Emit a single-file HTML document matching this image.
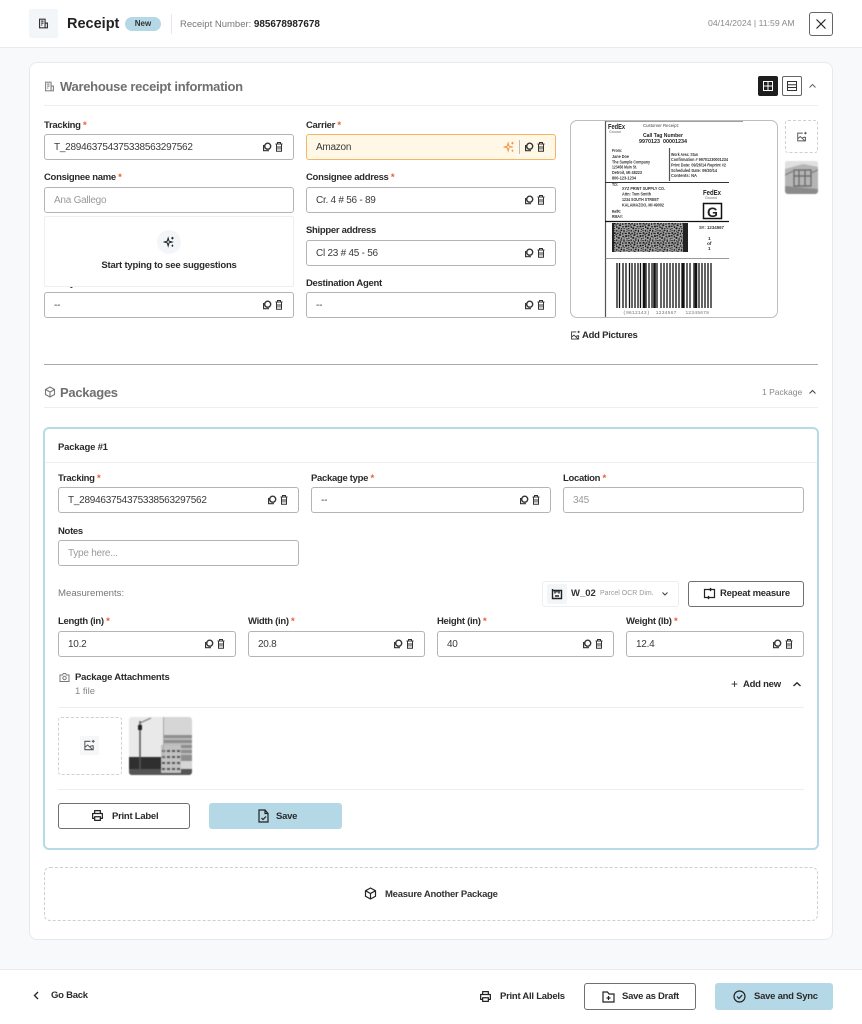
<!DOCTYPE html>
<html lang="en"><head><meta charset="utf-8"><title>Receipt</title>
<style>
*{box-sizing:border-box}
html,body{margin:0;padding:0}
body{width:862px;height:1024px;position:relative;overflow:hidden;background:#f8f9fb;font-family:"Liberation Sans",sans-serif;color:#1c1c1c}
.a{position:absolute}
.t{position:absolute;white-space:nowrap;line-height:14px}
.lb{position:absolute;white-space:nowrap;font-size:9.5px;letter-spacing:-.3px;font-weight:700;color:#2b2b2b;line-height:14px}
.lb i{color:#ef5a2a;font-style:normal}
.in{position:absolute;height:26px;background:#fff;border:1px solid #b4b4b4;border-radius:3px;font-size:10px;letter-spacing:-.25px;line-height:25px;padding-left:9px;color:#3a3a3a;white-space:nowrap}
.in.ph{color:#9a9a9a}
.ic{position:absolute;right:5px;top:6px;width:28px;height:12px;display:block}
svg{display:block}
.ln{position:absolute;height:1px;background:#eceef0}
.btn{position:absolute;border-radius:3px;font-size:9.5px;letter-spacing:-.25px;font-weight:700;color:#2b2b2b;white-space:nowrap}
.ol{background:#fff;border:1px solid #707070}
.fl{background:#b5d8e6}
.bt{font-size:9.5px;letter-spacing:-.25px;font-weight:700;color:#2b2b2b}
.h{font-size:13px;letter-spacing:-.28px;font-weight:700;color:#6f6f6f;line-height:15px}
</style></head><body>
<svg width="0" height="0" style="position:absolute"><defs>
<symbol id="act" viewBox="0 0 28 12">
<circle cx="7.700" cy="5.200" r="3" fill="none" stroke="#333" stroke-width="1.400"/><path d="M3.600 4v5.700h5.400" fill="none" stroke="#333" stroke-width="1.200"/>
<path d="M15.500 3h7M17.500 3V1.500h3V3M16.500 3.500v6.800h5V3.500M18 5v3.500M20 5v3.500" fill="none" stroke="#333" stroke-width="1"/>
</symbol>
<symbol id="doc" viewBox="0 0 14 14"><path d="M2 12.500V1.500h7v11zM9 6.500h3v6H9M4 4h3M4 6.500h3M4 9h1.500" fill="none" stroke="currentColor" stroke-width="1.500"/></symbol>
<symbol id="pic" viewBox="0 0 14 14"><path d="M8 2.500H2v9h9V7M2 9l3-2.500 5 4.500M7.500 8l3.500-1M11 1v3M9.500 2.500h3" fill="none" stroke="currentColor" stroke-width="1.100"/></symbol>
<symbol id="print" viewBox="0 0 16 16"><path d="M4.500 5V2h7v3M4.500 11.500H2V5.500h12v6h-2.500M4.500 9.500h7V14h-7z" fill="none" stroke="#222" stroke-width="1.500" stroke-linejoin="round"/></symbol>
<symbol id="spark" viewBox="0 0 14 14"><path d="M6 2.500l1 3.500 3.500 1-3.500 1-1 3.500-1-3.500-3.500-1 3.500-1zM11 1v3M9.500 2.500h3M11 10v2.500M10 11.200h2" fill="none" stroke="currentColor" stroke-width="1.200"/></symbol>
<pattern id="qr" width="24" height="16" patternUnits="userSpaceOnUse" patternTransform="scale(.6)"><rect width="24" height="16" fill="#a8a8a8"/><path d="M0 0h3v2H0zM5 1h2v3H5zM9 0h4v1H9zM15 1h3v2h-3zM20 0h3v3h-3zM1 4h2v2H1zM8 3h3v3H8zM13 4h2v2h-2zM17 4h3v1h-3zM22 5h2v2h-2zM0 8h4v1H0zM5 7h2v3H5zM9 8h1v3H9zM12 7h3v2h-3zM17 7h2v4h-2zM21 9h3v1h-3zM1 11h3v3H1zM6 12h3v2H6zM11 10h2v3h-2zM15 12h2v3h-2zM19 12h4v2h-4zM4 14h2v2H4zM10 14h3v2h-3z" fill="#111"/></pattern>
</defs></svg>

<!-- top bar -->
<div class="a" style="left:0;top:0;width:862px;height:48px;background:#fff;border-bottom:1px solid #e8eaee"></div>
<div class="a" style="left:29px;top:9px;width:29px;height:29px;background:#f3f6f8;border-radius:2px;color:#333;padding:9px"><svg width="11" height="11"><use href="#doc"/></svg></div>
<div class="t" style="left:67px;top:17px;font-size:14.500px;font-weight:700;color:#222">Receipt</div>
<div class="a" style="left:125px;top:17px;width:36px;height:14px;border-radius:7px;background:#b5d8e6;font-size:8px;font-weight:700;text-align:center;line-height:14px;color:#333">New</div>
<div class="a" style="left:171px;top:14px;width:1px;height:20px;background:#e6e8ea"></div>
<div class="t" style="left:180px;top:18px;font-size:9.500px;color:#777">Receipt Number: <b style="color:#222;font-size:9.900px">985678987678</b></div>
<div class="t" style="left:708px;top:16px;font-size:8.700px;color:#8a8a8a">04/14/2024 | 11:59 AM</div>
<div class="a" style="left:809px;top:12px;width:24px;height:24px;border:1px solid #666;border-radius:3px;background:#fff"><svg width="22" height="22"><path d="M6.500 6.500l9 9M15.500 6.500l-9 9" stroke="#222" stroke-width="1.200"/></svg></div>

<!-- main card -->
<div class="a" style="left:29px;top:62px;width:804px;height:878px;background:#fff;border:1px solid #e7e9ed;border-radius:8px"></div>
<div class="a" style="left:44px;top:81px;color:#888"><svg width="11" height="11"><use href="#doc"/></svg></div>
<div class="t h" style="left:60px;top:79px">Warehouse receipt information</div>
<div class="a" style="left:758px;top:76px;width:20px;height:20px;background:#1e1e1e;border-radius:2px"><svg width="20" height="20"><path d="M5.500 5.500h9v9h-9zM10 5.500v9M5.500 10h9" fill="none" stroke="#fff" stroke-width="1"/></svg></div>
<div class="a" style="left:782px;top:76px;width:20px;height:20px;border:1px solid #666;border-radius:2px;background:#fff"><svg width="18" height="18"><path d="M4.500 4.500h9v9h-9zM4.500 7.700h9M4.500 10.500h9" fill="none" stroke="#333" stroke-width="1"/></svg></div>
<svg class="a" style="left:808px;top:83px" width="9" height="6"><path d="M1.500 4.500L4.500 1.500l3 3" fill="none" stroke="#666" stroke-width="1"/></svg>
<div class="ln" style="left:44px;top:105px;width:774px"></div>

<div class="lb" style="left:44px;top:119px">Tracking <i>*</i></div>
<div class="in" style="left:44px;top:134px;width:250px">T_289463754375338563297562<svg class="ic"><use href="#act"/></svg></div>
<div class="lb" style="left:306px;top:119px">Carrier <i>*</i></div>
<div class="in" style="left:306px;top:134px;width:250px;background:#fff8e6;border-color:#f5b565">Amazon
<svg class="a" style="left:196px;top:6px;color:#f0954a" width="12" height="12" viewBox="0 0 14 14"><use href="#spark"/></svg>
<div class="a" style="left:212px;top:5px;width:1px;height:14px;background:#bbb"></div><svg class="ic"><use href="#act"/></svg></div>

<div class="lb" style="left:44px;top:171px">Consignee name <i>*</i></div>
<div class="in ph" style="left:44px;top:187px;width:250px">Ana Gallego</div>
<div class="lb" style="left:306px;top:171px">Consignee address <i>*</i></div>
<div class="in" style="left:306px;top:187px;width:250px">Cr. 4 # 56 - 89<svg class="ic"><use href="#act"/></svg></div>
<div class="lb" style="left:306px;top:224px">Shipper address</div>
<div class="in" style="left:306px;top:240px;width:250px">Cl 23 # 45 - 56<svg class="ic"><use href="#act"/></svg></div>
<div class="lb" style="left:306px;top:277px">Destination Agent</div>
<div class="in" style="left:306px;top:292px;width:250px">--<svg class="ic"><use href="#act"/></svg></div>
<div class="in" style="left:44px;top:292px;width:250px">--<svg class="ic"><use href="#act"/></svg></div>
<div class="lb" style="left:44px;top:277px">Priority</div>

<!-- suggestions -->
<div class="a" style="left:44px;top:216px;width:250px;height:71px;background:#fff;border:1px solid #eceef0;border-radius:2px"></div>
<div class="a" style="left:157px;top:230px;width:24px;height:24px;border-radius:12px;background:#f3f6f8;color:#222;padding:6px"><svg width="12" height="12" viewBox="0 0 14 14"><use href="#spark"/></svg></div>
<div class="t bt" style="left:44px;top:259px;width:250px;text-align:center;letter-spacing:-.2px">Start typing to see suggestions</div>

<!-- shipping label -->
<div class="a" style="left:570px;top:120px;width:208px;height:198px;border:1px solid #bdbdbd;border-radius:7px;background:#fff;overflow:hidden">
<svg style="filter:blur(.3px)" width="208" height="198" viewBox="1 1 208 198" font-family="Liberation Sans" fill="#222">
<path d="M35.500 0v198" stroke="#555" stroke-width="1.200"/><path d="M35 1h138" stroke="#666" stroke-width="1.200"/>
<text x="38" y="9" font-size="7.500" font-weight="700" textLength="17" lengthAdjust="spacingAndGlyphs">FedEx</text>
<text x="39" y="13" font-size="3.500" fill="#666">Ground</text>
<text x="73" y="7" font-size="4.600" fill="#444" textLength="36" lengthAdjust="spacingAndGlyphs">Customer Receipt:</text>
<text x="73" y="17" font-size="5.200" font-weight="700" textLength="40" lengthAdjust="spacingAndGlyphs">Call Tag Number</text>
<text x="69" y="23" font-size="5.800" font-weight="700" textLength="48" lengthAdjust="spacingAndGlyphs" xml:space="preserve">9970123  00001234</text>
<g font-size="4.800" font-weight="700" fill="#333">
<text x="42" y="32" textLength="10" lengthAdjust="spacingAndGlyphs">From:</text><text x="42" y="38" textLength="17" lengthAdjust="spacingAndGlyphs">Jane Doe</text><text x="42" y="43.500" textLength="38" lengthAdjust="spacingAndGlyphs">The Sample Company</text><text x="42" y="48.500" textLength="25" lengthAdjust="spacingAndGlyphs">123456 Main St.</text><text x="42" y="54" textLength="30" lengthAdjust="spacingAndGlyphs">Detroit, MI 48223</text><text x="42" y="59.500" textLength="24" lengthAdjust="spacingAndGlyphs">800-123-1234</text>
<text x="101" y="36" textLength="27" lengthAdjust="spacingAndGlyphs">Work Area:   Stan</text><text x="101" y="41" textLength="57" lengthAdjust="spacingAndGlyphs">Confirmation # 99701230001234</text><text x="101" y="46.500" textLength="55" lengthAdjust="spacingAndGlyphs">Print Date: 09/26/14   Reprint #2</text><text x="101" y="52" textLength="46" lengthAdjust="spacingAndGlyphs">Scheduled Date:   09/30/14</text><text x="101" y="57" textLength="26" lengthAdjust="spacingAndGlyphs">Contents:   NA</text>
<text x="42" y="66" textLength="6" lengthAdjust="spacingAndGlyphs">TO:</text><text x="52" y="70" textLength="43" lengthAdjust="spacingAndGlyphs">XYZ PRINT SUPPLY CO.</text><text x="52" y="75.500" textLength="29" lengthAdjust="spacingAndGlyphs">Attn: Tom Smith</text><text x="52" y="81" textLength="37" lengthAdjust="spacingAndGlyphs">1234 SOUTH STREET</text><text x="52" y="86.500" textLength="42" lengthAdjust="spacingAndGlyphs">KALAMAZOO, MI 49002</text><text x="42" y="93" textLength="9" lengthAdjust="spacingAndGlyphs">RefR:</text><text x="42" y="98" textLength="11" lengthAdjust="spacingAndGlyphs">RMA#:</text>
<text x="129" y="109" textLength="25" lengthAdjust="spacingAndGlyphs">S#: 1234567</text><text x="138" y="120">1</text><text x="137" y="125">of</text><text x="138" y="130">1</text>
</g>
<path d="M99.500 28v33" stroke="#555" stroke-width="1.200"/>
<path d="M35 62.500h124" stroke="#333" stroke-width="1"/><path d="M35 101.500h124" stroke="#111" stroke-width="1.300"/><path d="M35 138.500h124" stroke="#777" stroke-width=".8"/>
<text x="133" y="75" font-size="7.500" font-weight="700" textLength="18" lengthAdjust="spacingAndGlyphs">FedEx</text>
<text x="135" y="79" font-size="3.500" fill="#666">Ground</text>
<rect x="133.500" y="83.500" width="18" height="15" fill="#fff" stroke="#111" stroke-width="1.500"/>
<text x="137" y="97" font-size="14" font-weight="700">G</text>
<rect x="42" y="103" width="72" height="29" fill="url(#qr)"/><rect x="42" y="103" width="2" height="29"/><rect x="113" y="103" width="5" height="29"/>
<path d="M47 143v45M49.500 143v45M53 143v45M56 143v45M59.500 143v45M62 143v45M65 143v45M68 143v45M70.500 143v45M74 143v45M76 143v45M79 143v45M82 143v45M85 143v45M87 143v45M91 143v45M94 143v45M97 143v45M100 143v45M103 143v45M106 143v45M109 143v45M112 143v45M114 143v45M117 143v45M120 143v45M124 143v45M126 143v45M129 143v45M132 143v45M135 143v45M138 143v45M141 143v45" stroke="#111" stroke-width="1.300"/>
<path d="M74 143v45M84.500 143v45M113 143v45M126 143v45" stroke="#111" stroke-width="2.500"/>
<text x="53" y="194" font-size="4.800" fill="#777" font-family="Liberation Mono" textLength="86" xml:space="preserve">(9612143)  1234567   12345678</text>
</svg></div>
<div class="a" style="left:785px;top:120px;width:33px;height:33px;border:1px dashed #cfcfcf;border-radius:3px;color:#555;padding:10px"><svg width="12" height="12" viewBox="0 0 14 14"><use href="#pic"/></svg></div>
<svg class="a" style="left:785px;top:161px;border-radius:3px;filter:blur(.5px)" width="33" height="33"><rect width="33" height="33" fill="#b5b5b5"/><path d="M0 0h33v6L18 3 0 8z" fill="#e0e0e0"/><path d="M9 9h17v16H9zM14 9v16M20 9v16M9 15h17" fill="none" stroke="#666" stroke-width="1.200"/><path d="M0 25l33 3v5H0z" fill="#8b8b8b"/><path d="M0 14l8-4M33 9l-7 3" stroke="#777"/></svg>
<div class="a" style="left:570px;top:330px;color:#333"><svg width="11" height="11" viewBox="0 0 14 14"><use href="#pic"/></svg></div>
<div class="t bt" style="left:582px;top:329px">Add Pictures</div>

<div class="a" style="left:44px;top:364px;width:774px;height:1px;background:#a9a9a9"></div>
<!-- Packages -->
<svg class="a" style="left:44px;top:386px" width="12" height="12"><path d="M6 1l4.500 2.500v5L6 11 1.500 8.500v-5zM1.500 3.500L6 6l4.500-2.500M6 6v5" fill="none" stroke="#777" stroke-width="1.100"/></svg>
<div class="t h" style="left:60px;top:385px">Packages</div>
<div class="t" style="left:762px;top:385px;font-size:8.500px;color:#888">1 Package</div>
<svg class="a" style="left:808px;top:389px" width="9" height="6"><path d="M1.500 4.500L4.500 1.500l3 3" fill="none" stroke="#444" stroke-width="1"/></svg>
<div class="ln" style="left:44px;top:407px;width:774px"></div>

<!-- package card -->
<div class="a" style="left:43px;top:427px;width:776px;height:423px;background:#fff;border:2px solid #b5dbe9;border-radius:6px"></div>
<div class="t bt" style="left:58px;top:441px;letter-spacing:-.2px">Package #1</div>
<div class="ln" style="left:45px;top:462px;width:772px"></div>
<div class="lb" style="left:58px;top:472px">Tracking <i>*</i></div>
<div class="in" style="left:58px;top:487px;width:241px">T_289463754375338563297562<svg class="ic"><use href="#act"/></svg></div>
<div class="lb" style="left:311px;top:472px">Package type <i>*</i></div>
<div class="in" style="left:311px;top:487px;width:240px">--<svg class="ic"><use href="#act"/></svg></div>
<div class="lb" style="left:563px;top:472px">Location <i>*</i></div>
<div class="in ph" style="left:563px;top:487px;width:241px">345</div>
<div class="lb" style="left:58px;top:525px">Notes</div>
<div class="in ph" style="left:58px;top:540px;width:241px">Type here...</div>
<div class="t" style="left:58px;top:587px;font-size:9.600px;color:#777">Measurements:</div>

<div class="a" style="left:542px;top:581px;width:137px;height:26px;background:#fff;border:1px solid #eceef0;border-radius:3px"></div>
<div class="a" style="left:547px;top:584px;width:20px;height:20px;background:#f3f6f8;border-radius:2px"><svg width="20" height="20"><path d="M5.500 5v9.500h9V6.500h-9M8 6.500v3M12 6.500v3M10 6.500v2M8 12h4" fill="none" stroke="#222" stroke-width="1.400"/></svg></div>
<div class="t" style="left:571px;top:587px;font-size:9.500px;font-weight:700;color:#333">W_02</div>
<div class="t" style="left:600px;top:587px;font-size:7px;color:#999">Parcel OCR Dim.</div>
<svg class="a" style="left:661px;top:591px" width="8" height="6"><path d="M1.500 1.500L4 4l2.500-2.500" fill="none" stroke="#444" stroke-width="1.100"/></svg>
<div class="btn ol" style="left:688px;top:581px;width:116px;height:26px"><svg class="a" style="left:14px;top:5px" width="13" height="13"><path d="M4 2.500H1.500v8H4M9 2.500h2.500v8H9M4 2.500h4M9 10.500H5M7 1l1.500 1.500L7 4M6 9l-1.500 1.500L6 12" fill="none" stroke="#222" stroke-width="1.200"/></svg><span class="a" style="left:31px;top:5px;line-height:14px">Repeat measure</span></div>

<div class="lb" style="left:58px;top:615px">Length (in) <i>*</i></div>
<div class="in" style="left:58px;top:631px;width:178px">10.2<svg class="ic"><use href="#act"/></svg></div>
<div class="lb" style="left:248px;top:615px">Width (in) <i>*</i></div>
<div class="in" style="left:248px;top:631px;width:177px">20.8<svg class="ic"><use href="#act"/></svg></div>
<div class="lb" style="left:437px;top:615px">Height (in) <i>*</i></div>
<div class="in" style="left:437px;top:631px;width:177px">40<svg class="ic"><use href="#act"/></svg></div>
<div class="lb" style="left:626px;top:615px">Weight (lb) <i>*</i></div>
<div class="in" style="left:626px;top:631px;width:178px">12.4<svg class="ic"><use href="#act"/></svg></div>

<svg class="a" style="left:59px;top:672px" width="11" height="11"><path d="M1 3h2.500l1-1.500h2l1 1.500H10v6.500H1z" fill="none" stroke="#777"/><circle cx="5.500" cy="6" r="1.700" fill="none" stroke="#777"/></svg>
<div class="t bt" style="left:75px;top:671px;letter-spacing:-.2px">Package Attachments</div>
<div class="t" style="left:75px;top:685px;font-size:9.500px;color:#888">1 file</div>
<div class="t" style="left:731px;top:677px;font-size:12px;color:#2b2b2b">+</div>
<div class="t bt" style="left:743px;top:678px">Add new</div>
<svg class="a" style="left:792px;top:681px" width="10" height="7"><path d="M1.500 5L5 1.800 8.500 5" fill="none" stroke="#222" stroke-width="1.300"/></svg>
<div class="ln" style="left:58px;top:707px;width:746px"></div>
<div class="a" style="left:58px;top:717px;width:64px;height:58px;border:1px dashed #cfcfcf;border-radius:3px"></div>
<div class="a" style="left:80px;top:736px;width:19px;height:19px;background:#f6f7f8;color:#555;padding:3px"><svg width="13" height="13"><use href="#pic"/></svg></div>
<svg class="a" style="left:129px;top:717px;border-radius:3px;filter:blur(.5px)" width="63" height="58"><rect width="63" height="58" fill="#d6d6d6"/><rect x="0" y="0" width="34" height="40" fill="#e9e9e9"/><rect x="34" y="18" width="29" height="26" fill="#8f8f8f"/><path d="M34 22h29M34 27h29M34 32h29M34 37h29" stroke="#c8c8c8" stroke-width="1.500"/><rect x="0" y="40" width="32" height="18" fill="#2f2f2f"/><rect x="0" y="52" width="63" height="6" fill="#555"/><rect x="32" y="28" width="20" height="28" fill="#c2c2c2"/><path d="M33 34h18M33 40h18M33 46h18M33 52h18" stroke="#555" stroke-width="2" stroke-dasharray="3 2"/><path d="M11 4v50" stroke="#555" stroke-width="1.500"/><rect x="9" y="8" width="4" height="5" fill="#222"/><path d="M11 6L22 1" stroke="#777"/><rect x="34" y="0" width="1" height="40" fill="#aaa"/></svg>
<div class="ln" style="left:58px;top:789px;width:746px"></div>
<div class="btn ol" style="left:58px;top:803px;width:132px;height:26px"><svg class="a" style="left:32px;top:5px" width="13" height="13" viewBox="0 0 16 16"><use href="#print"/></svg><span class="a" style="left:53px;top:6px;line-height:14px">Print Label</span></div>
<div class="btn fl" style="left:209px;top:803px;width:133px;height:26px"><svg class="a" style="left:48px;top:6px" width="12" height="14"><path d="M2 1h6l3 3.500V13H2zM8 1v3.500h3M4.500 9l1.500 1.500 3-3" fill="none" stroke="#222" stroke-width="1.200"/></svg><span class="a" style="left:67px;top:7px;line-height:14px">Save</span></div>

<div class="a" style="left:44px;top:867px;width:774px;height:54px;border:1px dashed #cfcfcf;border-radius:6px"></div>
<svg class="a" style="left:364px;top:887px" width="13" height="13"><path d="M6.500 1l5 2.700v5.600l-5 2.700-5-2.700V3.700zM1.500 3.700l5 2.800 5-2.800M6.500 6.500V12" fill="none" stroke="#222" stroke-width="1.200"/></svg>
<div class="t bt" style="left:385px;top:888px;color:#333">Measure Another Package</div>

<!-- footer -->
<div class="a" style="left:0;top:969px;width:862px;height:55px;background:#fff;border-top:1px solid #e8eaee"></div>
<svg class="a" style="left:33px;top:991px" width="7" height="9"><path d="M5 1L1.500 4.500 5 8" fill="none" stroke="#222" stroke-width="1.300"/></svg>
<div class="t bt" style="left:51px;top:989px">Go Back</div>
<svg class="a" style="left:479px;top:990px" width="13" height="13" viewBox="0 0 16 16"><use href="#print"/></svg>
<div class="t bt" style="left:500px;top:990px">Print All Labels</div>
<div class="btn ol" style="left:584px;top:983px;width:112px;height:27px"><svg class="a" style="left:17px;top:6px" width="13" height="13"><path d="M1 2h4.500l1.500 2h5v8H1zM6.500 6v4M4.500 8h4" fill="none" stroke="#222" stroke-width="1.200"/></svg><span class="a" style="left:37px;top:6px;line-height:14px">Save as Draft</span></div>
<div class="btn fl" style="left:715px;top:983px;width:118px;height:27px"><svg class="a" style="left:18px;top:7px" width="13" height="13"><circle cx="6.500" cy="6.500" r="5.500" fill="none" stroke="#222" stroke-width="1.200"/><path d="M4 6.500l2 2 3.200-3.500" fill="none" stroke="#222" stroke-width="1.200"/></svg><span class="a" style="left:39px;top:7px;line-height:14px">Save and Sync</span></div>
</body></html>
